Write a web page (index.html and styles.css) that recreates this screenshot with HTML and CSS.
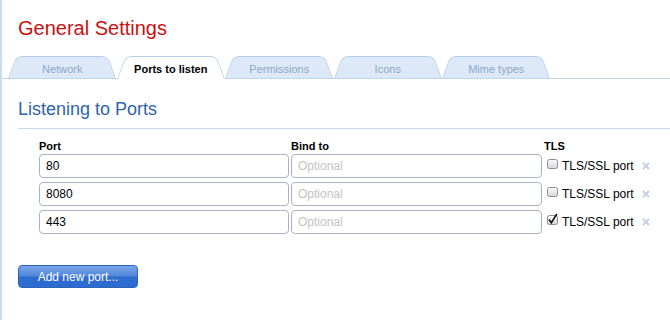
FILE: index.html
```html
<!DOCTYPE html>
<html lang="en">
<head>
  <meta charset="UTF-8">
  <title>General Settings</title>
  <link rel="stylesheet" href="styles.css">
</head>
<body>

<div class="page">
  <h1 class="title">General Settings</h1>

  <ul class="tabs">
    <li class="tab">Network</li>
    <li class="tab active">Ports to listen</li>
    <li class="tab">Permissions</li>
    <li class="tab">Icons</li>
    <li class="tab">Mime types</li>
  </ul>

  <h2 class="section-title">Listening to Ports</h2>

  <div class="ports">
    <div class="ports-head">
      <span>Port</span>
      <span>Bind to</span>
      <span>TLS</span>
    </div>

    <div class="port-row">
      <input class="field" value="80">
      <input class="field" placeholder="Optional">
      <label class="tls">
        <svg class="check" width="11" height="11" viewBox="0 0 11 11"><rect x="0.5" y="0.5" width="10" height="9" rx="2" fill="url(#cb)" stroke="#8c8c96"/><defs><linearGradient id="cb" x1="0" y1="0" x2="0" y2="1"><stop offset="0" stop-color="#fdfdfd"/><stop offset="1" stop-color="#d6d6dc"/></linearGradient></defs></svg>
        TLS/SSL port
      </label>
      <svg class="remove" width="8" height="8" viewBox="0 0 8 8"><path d="M1 1L7 7M7 1L1 7" stroke="#c3d1e2" stroke-width="1.8"/></svg>
    </div>

    <div class="port-row">
      <input class="field" value="8080">
      <input class="field" placeholder="Optional">
      <label class="tls">
        <svg class="check" width="11" height="11" viewBox="0 0 11 11"><rect x="0.5" y="0.5" width="10" height="9" rx="2" fill="url(#cb)" stroke="#8c8c96"/></svg>
        TLS/SSL port
      </label>
      <svg class="remove" width="8" height="8" viewBox="0 0 8 8"><path d="M1 1L7 7M7 1L1 7" stroke="#c3d1e2" stroke-width="1.8"/></svg>
    </div>

    <div class="port-row">
      <input class="field" value="443">
      <input class="field" placeholder="Optional">
      <label class="tls">
        <svg class="check" width="11" height="11" viewBox="0 0 11 11"><rect x="0.5" y="0.5" width="10" height="9" rx="2" fill="url(#cb)" stroke="#8c8c96"/><path d="M2 4.5L4.3 7.8L9.8 -1" fill="none" stroke="#111" stroke-width="1.6"/></svg>
        TLS/SSL port
      </label>
      <svg class="remove" width="8" height="8" viewBox="0 0 8 8"><path d="M1 1L7 7M7 1L1 7" stroke="#c3d1e2" stroke-width="1.8"/></svg>
    </div>
  </div>

  <button class="btn">Add new port...</button>
</div>

</body>
</html>
```

FILE: styles.css
```css
body { margin: 0; font-family: "Liberation Sans", Arial, sans-serif; background: #fff; color: #000; }
.page { border-left: 2px solid #c9dcef; min-height: 320px; box-sizing: border-box; padding-top: 17px; overflow: hidden; }

.title { margin: 0 0 0 16px; font-size: 20px; line-height: 23px; font-weight: normal; color: #cc1010; }

/* tab strip */
.tabs { list-style: none; margin: 16px 0 0; padding: 0 0 0 6px; display: flex; height: 22px; border-bottom: 1px solid #c2d6ea; }
.tab { position: relative; z-index: 0; flex: 0 0 108.5px; height: 22px; box-sizing: border-box; padding-top: 7px; line-height: 13px; text-align: center; font-size: 11px; color: #8ea6c4; }
.tab::before, .tab::after { content: ""; position: absolute; top: 0; bottom: 0; z-index: -1; background: #dde9f8; border: 1px solid #b8cee7; border-bottom: none; }
.tab::before { left: 0; right: 50%; border-right: none; border-radius: 6px 0 0 0; transform: skewX(-20deg); transform-origin: bottom left; }
.tab::after { right: 0; left: 50%; border-left: none; border-radius: 0 6px 0 0; transform: skewX(20deg); transform-origin: bottom right; }
.tab.active { z-index: 1; color: #000; font-weight: bold; }
.tab.active::before, .tab.active::after { background: #fff; bottom: -1px; }

.section-title { margin: 20px 0 0 16px; padding-bottom: 8px; border-bottom: 1px solid #c6d8ea; font-size: 18px; line-height: 21px; font-weight: normal; color: #2f63ab; }

/* ports table */
.ports { margin: 11px 0 0 37px; }
.ports-head, .port-row { display: grid; grid-template-columns: 250px 251px auto; column-gap: 2px; }
.ports-head { font-size: 11px; font-weight: bold; line-height: 13px; margin-bottom: 1px; }
.port-row { align-items: center; grid-template-columns: 250px 251px auto 1fr; }
.port-row + .port-row { margin-top: 4px; }
.field { height: 24px; box-sizing: border-box; margin: 0; border: 1px solid #a9b5c6; border-radius: 4px; padding: 0 6px; font: 12px "Liberation Sans", Arial, sans-serif; color: #000; outline: none; }
.field::placeholder { color: #c3c3c3; }

.tls { display: flex; align-items: center; font-size: 12px; line-height: 14px; padding-left: 3px; }
.check { margin: 0 4px 4px 0; overflow: visible; flex: none; }
.remove { margin-left: 6px; margin-bottom: 1px; }

.btn { display: block; margin: 31px 0 0 16px; width: 120px; height: 23px; padding: 0; border: 1px solid #2f63b8; border-radius: 4px; background: linear-gradient(#7aa6e8, #5088da 48%, #2f6ccf 52%, #2d6bd0); color: #fff; font: 12px "Liberation Sans", Arial, sans-serif; }
```
